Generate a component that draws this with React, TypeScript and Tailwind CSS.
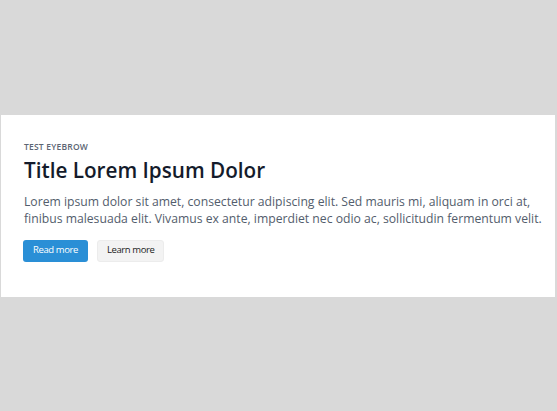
import React from 'react';

const Card: React.FC = () => {
  return (
    <div className="bg-white w-full pl-[23px] pr-[10px] pt-[26px] pb-[35px]">
      <p className="text-[8.5px] leading-[12px] font-semibold tracking-wide text-[#5b6573] uppercase">Test eyebrow</p>
      <h1 className="mt-[3px] text-[20.7px] leading-[28px] font-semibold text-[#141b2b]">Title Lorem Ipsum Dolor</h1>
      <p className="mt-[9px] text-[12.2px] leading-[17px] text-[#535d6c]">
        Lorem ipsum dolor sit amet, consectetur adipiscing elit. Sed mauris mi, aliquam in orci at, finibus malesuada elit. Vivamus ex ante, imperdiet nec odio ac, sollicitudin fermentum velit.
      </p>
      <div className="mt-[13px] -ml-px flex gap-[9px]">
        <button className="h-[22px] px-[10px] rounded-[3px] bg-[#2a8fd6] text-white text-[9.5px] tracking-[-0.4px] font-medium">Read more</button>
        <button className="h-[22px] px-[9px] rounded-[3px] bg-[#f3f3f3] border border-[#ececec] text-[#1c1c1c] text-[9.5px] tracking-[-0.4px] font-medium">Learn more</button>
      </div>
    </div>
  );
};

export default function App() {
  return (
    <div className="min-h-screen flex items-center bg-[#d9d9d9] pl-[1px] pr-[2px]" style={{ fontFamily: '"Open Sans", sans-serif' }}>
      <Card />
    </div>
  );
}
